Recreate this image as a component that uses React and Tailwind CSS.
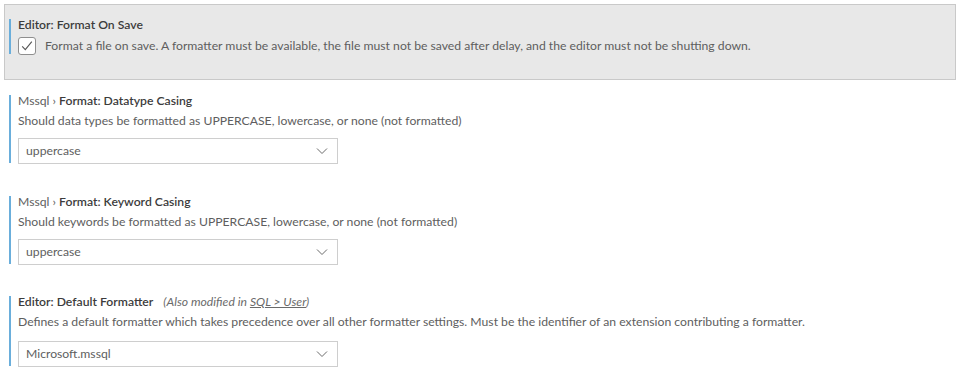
import React from "react";

const Chevron = () => (
  <svg width="12" height="8" viewBox="0 0 12 8" className="shrink-0">
    <path d="M1 1.5 L6 6.5 L11 1.5" fill="none" stroke="#6b6b6b" strokeWidth="1" />
  </svg>
);

const Select = ({ value, mt }) => (
  <div className={`${mt} w-[320px] h-[26px] border border-[#cecece] bg-white flex items-center justify-between pl-[7px] pr-[9px] text-[#5e5e5e]`}>
    <span>{value}</span>
    <Chevron />
  </div>
);

const Bar = () => <div className="w-[2px] bg-[#6aaedb] mt-[4px] mb-[1px] shrink-0" />;

export default function App() {
  return (
    <div
      className="w-[962px] h-[377px] bg-white pt-[4px] pl-[4px] pr-[6px] text-[12.2px] overflow-hidden"
      style={{ fontFamily: '"Segoe UI", Lato, sans-serif' }}
    >
      {/* Section 1 */}
      <div className="h-[76px] border border-[#c9c9c9] bg-[#e8e8e8] pt-[10px] pl-[4px]">
        <div className="flex">
          <Bar />
          <div className="ml-[7px] flex-1">
            <div className="h-[20px] leading-[20px] text-[#3c3c3c] font-semibold">Editor: Format On Save</div>
            <div className="mt-[2px] flex items-center">
              <div className="w-[18px] h-[18px] border border-[#8f8f8f] rounded-[3px] bg-white flex items-center justify-center">
                <svg width="14" height="14" viewBox="0 0 14 14">
                  <path d="M2.2 7.4 L5.3 10.6 L11.8 2.6" fill="none" stroke="#555" strokeWidth="1.1" />
                </svg>
              </div>
              <span className="ml-[9px] text-[#5e5e5e] leading-[18px]">
                Format a file on save. A formatter must be available, the file must not be saved after delay, and the editor must not be shutting down.
              </span>
            </div>
          </div>
        </div>
      </div>

      {/* Section 2 */}
      <div className="mt-[11px] pl-[5px] flex">
        <Bar />
        <div className="ml-[7px]">
          <div className="h-[20px] leading-[20px] text-[#3c3c3c]">
            <span className="text-[#5e5e5e]">Mssql › </span>
            <span className="font-semibold">Format: Datatype Casing</span>
          </div>
          <div className="h-[20px] leading-[20px] text-[#5e5e5e]">
            Should data types be formatted as UPPERCASE, lowercase, or none (not formatted)
          </div>
          <Select value="uppercase" mt="mt-[7px]" />
        </div>
      </div>

      {/* Section 3 */}
      <div className="mt-[28px] pl-[5px] flex">
        <Bar />
        <div className="ml-[7px]">
          <div className="h-[20px] leading-[20px] text-[#3c3c3c]">
            <span className="text-[#5e5e5e]">Mssql › </span>
            <span className="font-semibold">Format: Keyword Casing</span>
          </div>
          <div className="h-[20px] leading-[20px] text-[#5e5e5e]">
            Should keywords be formatted as UPPERCASE, lowercase, or none (not formatted)
          </div>
          <Select value="uppercase" mt="mt-[7px]" />
        </div>
      </div>

      {/* Section 4 */}
      <div className="mt-[27px] pl-[5px] flex">
        <Bar />
        <div className="ml-[7px]">
          <div className="h-[20px] leading-[20px] text-[#3c3c3c] flex items-center">
            <span className="font-semibold">Editor: Default Formatter</span>
            <span className="ml-[10px] italic text-[#6a6a6a]">
              (Also modified in <span className="underline">SQL &gt; User</span>)
            </span>
          </div>
          <div className="h-[20px] leading-[20px] text-[#5e5e5e]">
            Defines a default formatter which takes precedence over all other formatter settings. Must be the identifier of an extension contributing a formatter.
          </div>
          <Select value="Microsoft.mssql" mt="mt-[9px]" />
        </div>
      </div>
    </div>
  );
}
